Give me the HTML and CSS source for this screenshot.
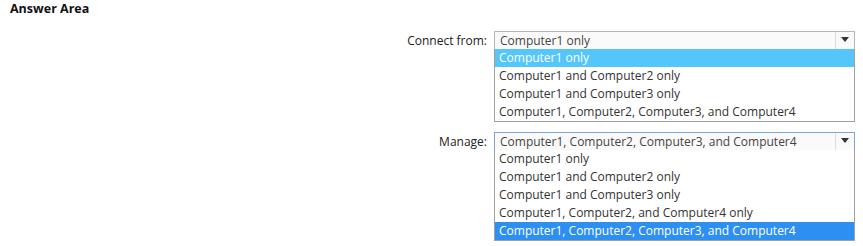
FILE: index.html
```html
<!DOCTYPE html>
<html lang="en">

<head>
  <meta charset="UTF-8">
  <title>Answer Area</title>
  <link rel="stylesheet" href="styles.css">
</head>

<body>
  <div class="page">
    <h1>Answer Area</h1>

    <div class="field first">
      <div class="label">Connect from:</div>
      <div class="control">
        <div class="select">
          <span class="value">Computer1 only</span>
          <span class="arrow"></span>
        </div>
        <ul class="list">
          <li class="picked light">Computer1 only</li>
          <li>Computer1 and Computer2 only</li>
          <li>Computer1 and Computer3 only</li>
          <li>Computer1, Computer2, Computer3, and Computer4</li>
        </ul>
      </div>
    </div>

    <div class="field second">
      <div class="label">Manage:</div>
      <div class="control">
        <div class="select focus">
          <span class="value">Computer1, Computer2, Computer3, and Computer4</span>
          <span class="arrow"></span>
        </div>
        <ul class="list">
          <li>Computer1 only</li>
          <li>Computer1 and Computer2 only</li>
          <li>Computer1 and Computer3 only</li>
          <li>Computer1, Computer2, and Computer4 only</li>
          <li class="picked">Computer1, Computer2, Computer3, and Computer4</li>
        </ul>
      </div>
    </div>
  </div>
</body>

</html>
```

FILE: styles.css
```css
body {
  margin: 0;
  background: #fff;
  font-family: "Open Sans", Arial, sans-serif;
  color: #333;
}

.page {
  padding: 1px 8px 0 10px;
}

h1 {
  margin: 0;
  font-size: 12.5px;
  font-weight: bold;
  color: #111;
  line-height: 16px;
}

.field {
  display: grid;
  grid-template-columns: 1fr 361px;
  font-size: 12px;
}

.first {
  margin-top: 14px;
}

.second {
  margin-top: 10px;
}

.label {
  text-align: right;
  padding-right: 7px;
  line-height: 16px;
  padding-top: 2px;
  color: #222;
}

.select {
  display: flex;
  height: 17px;
  border: 1px solid #b5b5b5;
  border-bottom: none;
  overflow: hidden;
  background: #fafafa;
}

.select.focus {
  border-color: #7fa6d6;
}

.value {
  flex: 1;
  padding: 1px 0 0 5px;
  line-height: 16px;
  color: #444;
  white-space: nowrap;
}

.arrow {
  width: 18px;
  border-left: 1px solid #ddd;
  position: relative;
}

.arrow::after {
  content: "";
  position: absolute;
  left: 5px;
  top: 5px;
  border-left: 4px solid transparent;
  border-right: 4px solid transparent;
  border-top: 5px solid #333;
}

.list {
  list-style: none;
  margin: 0;
  padding: 0;
  border: 1px solid #a0a0a0;
  border-top: none;
  background: #fff;
}

.list li {
  height: 18px;
  line-height: 18px;
  padding-left: 4px;
  white-space: nowrap;
}

.list li.picked {
  background: #2e8ff3;
  color: #fff;
}

.list li.picked.light {
  background: #55c6fa;
}
```
